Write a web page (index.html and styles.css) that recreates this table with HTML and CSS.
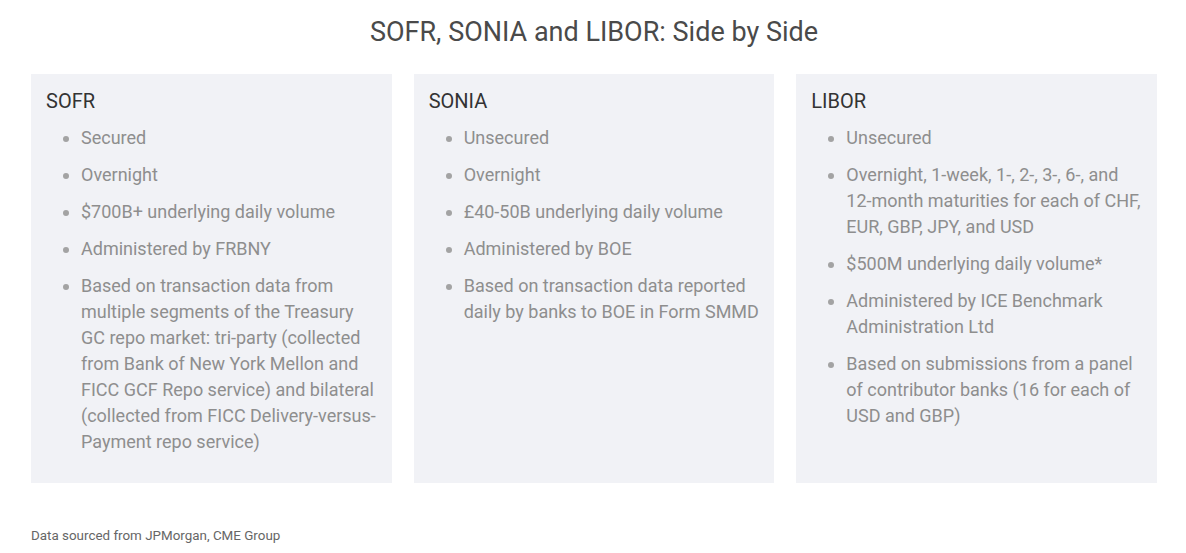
FILE: index.html
```html
<!DOCTYPE html>
<html>
<head>
<meta charset="utf-8">
<link rel="stylesheet" href="styles.css">
</head>
<body>
<div class="page">
  <h1 class="title">SOFR, SONIA and LIBOR: Side by Side</h1>
  <div class="cards">
    <div class="card">
      <h2 class="card-title">SOFR</h2>
      <ul class="list">
        <li>Secured</li>
        <li>Overnight</li>
        <li>$700B+ underlying daily volume</li>
        <li>Administered by FRBNY</li>
        <li>Based on transaction data from multiple segments of the Treasury GC repo market: tri-party (collected from Bank of New York Mellon and FICC GCF Repo service) and bilateral (collected from FICC Delivery-versus-Payment repo service)</li>
      </ul>
    </div>
    <div class="card">
      <h2 class="card-title">SONIA</h2>
      <ul class="list">
        <li>Unsecured</li>
        <li>Overnight</li>
        <li>£40-50B underlying daily volume</li>
        <li>Administered by BOE</li>
        <li>Based on transaction data reported daily by banks to BOE in Form SMMD</li>
      </ul>
    </div>
    <div class="card">
      <h2 class="card-title">LIBOR</h2>
      <ul class="list">
        <li>Unsecured</li>
        <li>Overnight, 1-week, 1-, 2-, 3-, 6-, and 12-month maturities for each of CHF, EUR, GBP, JPY, and USD</li>
        <li>$500M underlying daily volume*</li>
        <li>Administered by ICE Benchmark Administration Ltd</li>
        <li>Based on submissions from a panel of contributor banks (16 for each of USD and GBP)</li>
      </ul>
    </div>
  </div>
  <p class="source">Data sourced from JPMorgan, CME Group</p>
</div>
</body>
</html>
```

FILE: styles.css
```css
html, body {
  margin: 0;
  padding: 0;
  background: #ffffff;
}
body {
  font-family: Roboto, "Liberation Sans", Arial, sans-serif;
}
.page {
  padding: 17px 29px 0 31px;
}
.title {
  margin: 0;
  text-align: center;
  font-size: 27px;
  line-height: 30px;
  font-weight: 400;
  color: #4a4a4a;
}
.cards {
  display: flex;
  gap: 22px;
  margin-top: 27px;
}
.card {
  flex: 1 1 0;
  background: #f1f2f6;
  padding: 16px 15px 0 15px;
  height: 409px;
  box-sizing: border-box;
}
.card-title {
  margin: 0;
  font-size: 20px;
  line-height: 22px;
  font-weight: 400;
  color: #333333;
}
.list {
  margin: 13px 0 0 0;
  padding-left: 35px;
  color: #8e8e8e;
  font-size: 18px;
  line-height: 26px;
}
.list li {
  margin-top: 11px;
}
.list li::marker {
  color: #a3a3a3;
}
.list li:first-child {
  margin-top: 0;
}
.source {
  margin: 45px 0 0 0;
  font-size: 13.4px;
  line-height: 16px;
  color: #666666;
}
```
